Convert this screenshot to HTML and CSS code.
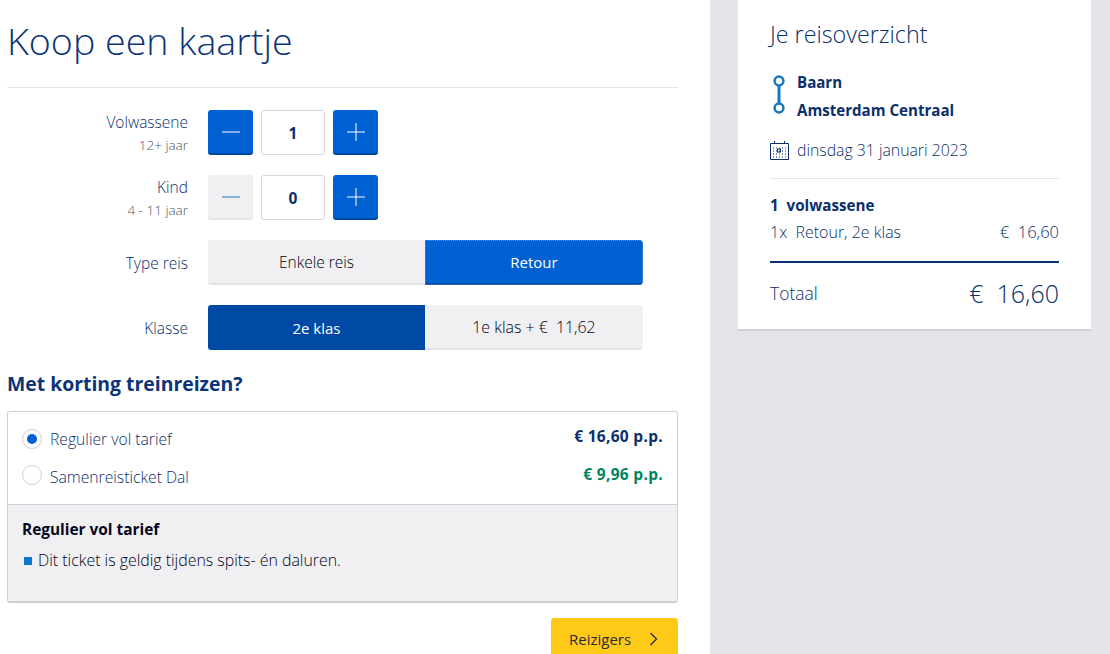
FILE: index.html
```html
<!DOCTYPE html>
<html lang="nl">
<head>
<meta charset="utf-8">
<title>Koop een kaartje</title>
<link rel="stylesheet" href="styles.css">
</head>
<body>
<div class="page">
  <main class="main">
    <h1 class="title">Koop een kaartje</h1>
    <div class="form">
      <div class="row">
        <div class="label"><div>Volwassene</div><div class="sub">12+ jaar</div></div>
        <div class="stepper">
          <button class="step"><svg width="30" height="30" viewBox="0 0 30 30"><path d="M6 15h18" stroke="currentColor" stroke-width="1"/></svg></button>
          <div class="count">1</div>
          <button class="step"><svg width="30" height="30" viewBox="0 0 30 30"><path d="M6 15h18M15 6v18" stroke="currentColor" stroke-width="1"/></svg></button>
        </div>
      </div>
      <div class="row">
        <div class="label"><div>Kind</div><div class="sub">4 - 11 jaar</div></div>
        <div class="stepper">
          <button class="step off"><svg width="30" height="30" viewBox="0 0 30 30"><path d="M6 15h18" stroke="currentColor" stroke-width="1"/></svg></button>
          <div class="count">0</div>
          <button class="step"><svg width="30" height="30" viewBox="0 0 30 30"><path d="M6 15h18M15 6v18" stroke="currentColor" stroke-width="1"/></svg></button>
        </div>
      </div>
      <div class="row">
        <div class="label">Type reis</div>
        <div class="seg">
          <div class="opt">Enkele reis</div>
          <div class="opt on focus">Retour</div>
        </div>
      </div>
      <div class="row">
        <div class="label">Klasse</div>
        <div class="seg">
          <div class="opt dark">2e klas</div>
          <div class="opt wide">1e klas + €&nbsp; 11,62</div>
        </div>
      </div>
    </div>
    <h2 class="heading">Met korting treinreizen?</h2>
    <section class="box">
      <div class="choices">
        <div class="choice">
          <span class="radio checked"></span><span class="name">Regulier vol tarief</span>
          <span class="price">€ 16,60 p.p.</span>
        </div>
        <div class="choice">
          <span class="radio"></span><span class="name">Samenreisticket Dal</span>
          <span class="price green">€ 9,96 p.p.</span>
        </div>
      </div>
      <div class="info">
        <div class="info-title">Regulier vol tarief</div>
        <div class="info-item"><span class="bullet"></span>Dit ticket is geldig tijdens spits- én daluren.</div>
      </div>
    </section>
    <div class="actions">
      <button class="next">Reizigers
        <svg width="12" height="16" viewBox="0 0 12 16"><path d="M2.5 2l6 6-6 6" fill="none" stroke="currentColor" stroke-width="1.300"/></svg>
      </button>
    </div>
  </main>
  <aside class="side">
    <div class="card">
      <h2 class="card-title">Je reisoverzicht</h2>
      <div class="route">
        <svg class="route-line" width="12" height="42" viewBox="0 0 12 42"><path d="M6 9v24" stroke="#1a76bd" stroke-width="3"/><circle cx="6" cy="6" r="4.4" fill="#fff" stroke="#1a76bd" stroke-width="2.500"/><circle cx="6" cy="33" r="4.4" fill="#fff" stroke="#1a76bd" stroke-width="2.500"/></svg>
        <div class="stations"><div>Baarn</div><div>Amsterdam Centraal</div></div>
      </div>
      <div class="date">
        <svg width="19" height="19" viewBox="0 0 19 19"><path d="M.5 2.5h18v16H.5zM4.500 0v3M14.500 0v3" fill="none" stroke="#0b2f6b"/><path d="M3 7h13M3 10h13M3 13h13M3 16h13" stroke="#0b2f6b" stroke-dasharray="1 2"/><rect x="7.500" y="8" width="3" height="3" fill="none" stroke="#0b2f6b"/></svg>
        <span>dinsdag 31 januari 2023</span>
      </div>
      <div class="lines">
        <div class="who">1&nbsp; volwassene</div>
        <div class="line"><span>1x&nbsp; Retour, 2e klas</span><span class="amount">€&nbsp; 16,60</span></div>
      </div>
      <div class="total"><span>Totaal</span><span class="sum">€&nbsp; 16,60</span></div>
    </div>
  </aside>
</div>
</body>
</html>
```
FILE: styles.css
```css
* { box-sizing: border-box; }
html, body { margin: 0; height: 100%; overflow: hidden; }
body { font-family: "Open Sans", "Noto Sans", sans-serif; color: #0b2f6b; background: #fff; }
.page { display: flex; width: 1110px; height: 654px; overflow: hidden; }

.main { width: 710px; flex: none; padding: 0 32px 0 7px; }
.title { margin: 0; height: 88px; padding-top: 15px; font-size: 37.600px; line-height: 52px; font-weight: 300; color: #0b3478; border-bottom: 1px solid #e6e6e9; }

.form { display: flex; flex-direction: column; gap: 20px; padding-top: 22px; }
.row { display: flex; align-items: center; height: 45px; gap: 20px; }
.label { width: 181px; text-align: right; font-size: 15.500px; font-weight: 300; color: #0b2f6b; line-height: 24px; }
.sub { font-size: 13.500px; color: #4f5460; line-height: 22px; }

.stepper { display: flex; gap: 8px; }
.step { width: 45px; height: 45px; padding: 0; border: 0; border-bottom: 2px solid #0047a0; border-radius: 3px; background: #0061d3; color: #fff; display: flex; align-items: center; justify-content: center; }
.step.off { background: #f0f0f2; color: #1e78c8; border-bottom-color: #e6e6e9; }
.count { width: 64px; height: 45px; border: 1px solid #d9d6da; border-radius: 3px; display: flex; align-items: center; justify-content: center; font-size: 15.500px; font-weight: 700; color: #0b2f6b; }

.seg { display: flex; width: 435px; height: 45px; }
.opt { flex: 1 1 218px; display: flex; align-items: center; justify-content: center; font-size: 15.500px; font-weight: 300; color: #000010; background: #f0f0f2; border-bottom: 2px solid #e4e4e8; border-radius: 0 4px 4px 0; }
.opt:first-child { flex: 0 0 217px; border-radius: 3px 0 0 3px; }
.opt.wide { font-size: 15.900px; }
.opt.on { background: #0061d3; color: #fff; font-weight: 400; font-size: 15px; border-bottom-color: #0047a0; }
.opt.focus { outline: 1px dotted #5c8ec8; outline-offset: -1px; }
.opt.dark { background: #004aa6; color: #fff; font-weight: 400; font-size: 15px; border-bottom: 0; }

.heading { margin: 21px 0 14px; font-size: 19.400px; line-height: 26px; font-weight: 700; color: #0b3478; }

.box { height: 192px; border: 1px solid #cfcfd5; border-radius: 3px; display: flex; flex-direction: column; overflow: hidden; border-bottom-width: 2px; }
.choices { height: 92px; padding-top: 9px; display: flex; flex-direction: column; }
.choice { display: flex; align-items: center; height: 36px; padding: 0 14px; }
.radio { width: 20px; height: 20px; border: 1px solid #cfcfd5; border-radius: 50%; margin-right: 8px; flex: none; display: flex; align-items: center; justify-content: center; }
.radio.checked::after { content: ""; width: 10px; height: 10px; border-radius: 50%; background: #0061d3; }
.name { font-size: 15.700px; font-weight: 300; color: #0b2f6b; position: relative; top: 2px; }
.choice:first-child .name { top: 0; }
.price { margin-left: auto; font-size: 15.500px; font-weight: 700; color: #0b2f6b; letter-spacing: .3px; position: relative; top: -1px; }
.choice:first-child .price { top: -3px; }
.price.green { color: #00845f; }
.info { flex: 1; background: #f0f0f2; border-top: 1px solid #cfcfd5; padding: 14px 14px 0; }
.info-title { font-size: 15.400px; font-weight: 700; line-height: 22px; color: #070721; }
.info-item { display: flex; align-items: center; margin-top: 9px; font-size: 15.900px; font-weight: 300; color: #000020; line-height: 20px; }
.bullet { width: 8px; height: 8px; background: #0a78cf; margin: 2px 6px 0 2px; flex: none; }

.actions { display: flex; justify-content: flex-end; margin-top: 15px; }
.next { width: 127px; height: 46px; padding: 0 18px 4px; border: 0; border-radius: 3px; background: #ffc917; color: #2c2a3e; font: 400 15px "Open Sans", sans-serif; display: flex; align-items: center; justify-content: space-between; }

.side { flex: 1; background: #e4e4e9; padding-left: 28px; }
.card { width: 353px; height: 331px; background: #fff; border-bottom: 2px solid #cfcfd5; padding: 0 32px; }
.card-title { margin: 0; padding-top: 18px; font-size: 23.300px; line-height: 32px; font-weight: 300; color: #0b2f6b; }
.route { display: flex; margin-top: 18px; gap: 15px; }
.route-line { margin: 7px -3px 0 3px; flex: none; }
.stations { font-size: 15.100px; font-weight: 700; line-height: 28px; color: #0b2f6b; }
.date { display: flex; align-items: center; gap: 8px; margin-top: 15px; padding-bottom: 17px; border-bottom: 1px solid #e6e6e9; font-size: 15.800px; font-weight: 300; color: #0b2f6b; line-height: 22px; }
.lines { padding-top: 14px; padding-bottom: 14px; border-bottom: 2px solid #0b3478; }
.who { font-size: 15.200px; font-weight: 700; line-height: 24px; color: #0b2f6b; }
.line { display: flex; justify-content: space-between; font-size: 16px; font-weight: 300; line-height: 30px; height: 30px; color: #0b2f6b; }
.amount { font-size: 16.500px; }
.total { display: flex; justify-content: space-between; align-items: center; height: 60px; font-size: 17.500px; font-weight: 300; color: #0b2f6b; }
.sum { font-size: 25px; }
```
